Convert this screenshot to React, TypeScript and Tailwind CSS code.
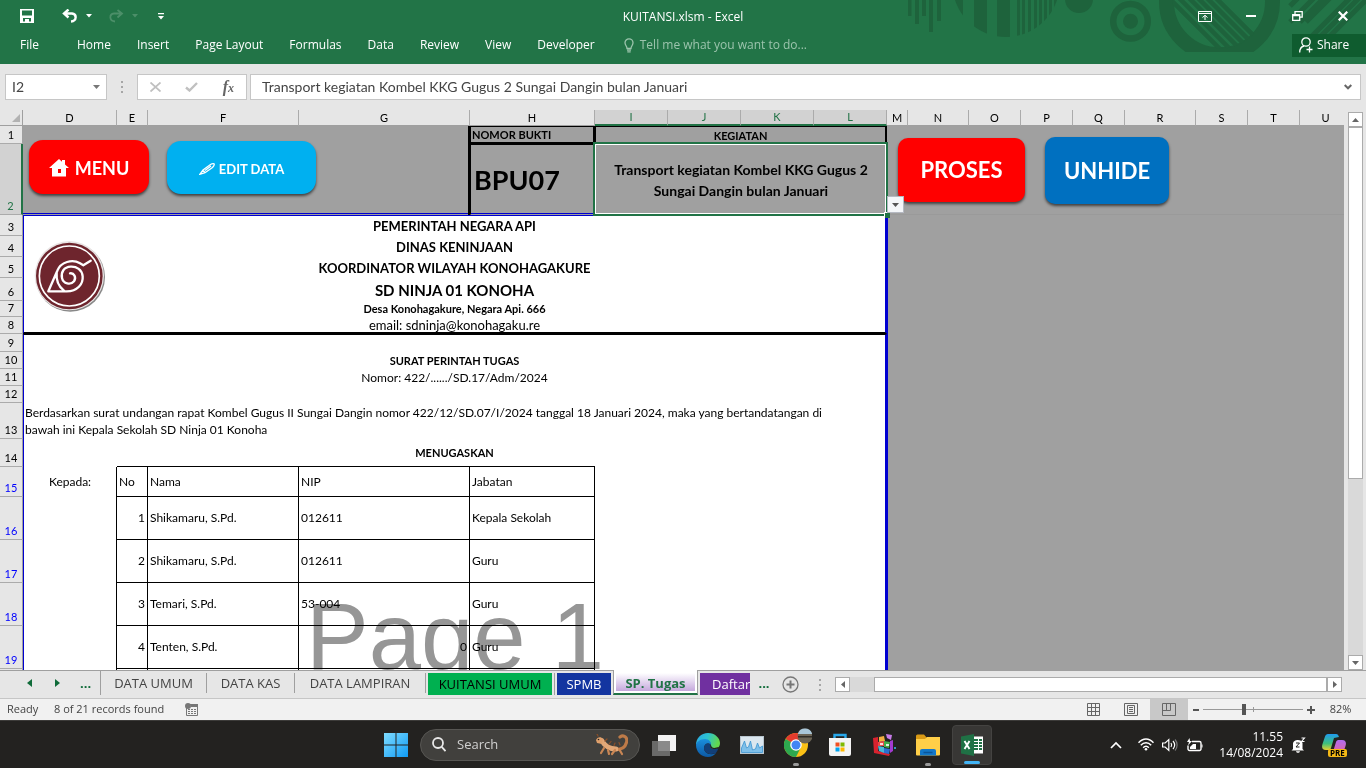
import type { ReactNode } from "react";

const COLS = [
  { id: "D", w: 94 },
  { id: "E", w: 31 },
  { id: "F", w: 151 },
  { id: "G", w: 171 },
  { id: "H", w: 125 },
  { id: "I", w: 73, active: true },
  { id: "J", w: 73, active: true },
  { id: "K", w: 73, active: true },
  { id: "L", w: 73, active: true },
  { id: "M", w: 21 },
  { id: "N", w: 61 },
  { id: "O", w: 52 },
  { id: "P", w: 52 },
  { id: "Q", w: 52 },
  { id: "R", w: 71 },
  { id: "S", w: 52 },
  { id: "T", w: 52 },
  { id: "U", w: 0 },
];

const MENUS = ["Home", "Insert", "Page Layout", "Formulas", "Data", "Review", "View", "Developer"];

const PEOPLE = [
  { row: 16, no: 1, nama: "Shikamaru, S.Pd.", nip: "012611", jabatan: "Kepala Sekolah" },
  { row: 17, no: 2, nama: "Shikamaru, S.Pd.", nip: "012611", jabatan: "Guru" },
  { row: 18, no: 3, nama: "Temari, S.Pd.", nip: "53-004", jabatan: "Guru" },
  { row: 19, no: 4, nama: "Tenten, S.Pd.", nip: "0", nipRight: true, jabatan: "Guru" },
];

/* ---------- title bar + ribbon ---------- */

function TitleArt() {
  const d = "#1e633c";
  return (
    <svg className="absolute top-0 right-0" width="466" height="52" viewBox="900 0 466 52" aria-hidden="true">
      <defs>
        <clipPath id="c1"><circle cx="1006" cy="-16.6" r="53.6" /></clipPath>
        <clipPath id="c2"><circle cx="1219.5" cy="1.8" r="47" /></clipPath>
      </defs>
      <g fill={d}>
        <rect x="908" width="3.5" height="16" />
        <rect x="915" width="4" height="24" />
        <rect x="922" width="4" height="16" />
        <rect x="929" width="4" height="32" />
        <rect x="937" width="4" height="21" />
        <g clipPath="url(#c1)">
          <rect x="950" width="13" height="52" />
          <rect x="974" width="13" height="52" />
          <rect x="997" width="13" height="52" />
          <rect x="1017" width="3" height="52" />
          <rect x="1022" width="3" height="52" />
          <rect x="1028" width="3" height="52" />
          <rect x="1034" width="3" height="52" />
          <rect x="1039" width="3" height="52" />
          <rect x="1044" width="3" height="52" />
          <rect x="1049" width="3" height="52" />
          <rect x="1054" width="3" height="52" />
        </g>
        <circle cx="1079" cy="-1" r="14" />
        <circle cx="1130.5" cy="21.3" r="7.5" />
      </g>
      <circle cx="1130.5" cy="21.3" r="17.3" fill="none" stroke={d} strokeWidth="6.5" />
      <circle cx="1219.5" cy="1.8" r="53" fill="none" stroke={d} strokeWidth="15" />
      <g clipPath="url(#c2)" stroke={d} strokeWidth="4.5">
        <path d="M1166 -5l60 60M1174 -7l60 60M1184 -7l60 60M1193 -7l60 60M1202 -7l60 60M1211 -7l60 60" />
      </g>
      <g stroke={d} strokeWidth="5">
        <path d="M1290 6l8 -8M1290 22l24 -24M1300 22l24 -24M1306 22l24 -24M1312 36l38 -38M1321 36l38 -38M1330 36l38 -38" />
      </g>
    </svg>
  );
}

function Caret({ className = "" }: { className?: string }) {
  return (
    <svg className={className} width="6" height="4" viewBox="0 0 6 4" aria-hidden="true">
      <path d="M0 0h6L3 3.5z" fill="currentColor" />
    </svg>
  );
}

function TitleBar() {
  return (
    <header className="relative shrink-0 h-16 bg-[#227447] text-white text-xs">
      <TitleArt />
      <div className="relative grid grid-cols-[1fr_auto_1fr] items-center h-8">
        <div className="flex items-center pl-5">
          <button aria-label="Save">
            <svg width="14" height="14" viewBox="0 0 14 14">
              <path d="M0 0h14v14H0zM2 1.5v5h10v-5zM3 9v3.500h2V10h4v2.500h2V9z" fill="#fff" fillRule="evenodd" />
              <path d="M7 10.500h1.500v2.500H7z" fill="#fff" />
            </svg>
          </button>
          <button aria-label="Undo" className="ml-7">
            <svg width="16" height="14" viewBox="0 0 16 14" fill="none" stroke="#fff" strokeWidth="2.400">
              <path d="M6.500 .5L2 4.500l4.500 4M2.500 4.500H10c5 .5 5 7.500-1 8" />
            </svg>
          </button>
          <Caret className="ml-2" />
          <button aria-label="Redo" className="ml-4 text-[#4c8f69]">
            <svg width="16" height="14" viewBox="0 0 16 14" fill="none" stroke="currentColor" strokeWidth="1.800">
              <path d="M9.500 1L14 4.500l-4.500 4M13.500 4.500H6c-5 .5-5 7.500 1 8" />
            </svg>
          </button>
          <Caret className="ml-2 text-[#4c8f69]" />
          <button aria-label="Customize Quick Access Toolbar" className="ml-5">
            <svg width="6" height="7" viewBox="0 0 6 7"><path d="M0 0h6v1.200H0zM0 3h6L3 6.500z" fill="#fff" /></svg>
          </button>
        </div>
        <h1 className="pt-[2px]">KUITANSI.xlsm - Excel</h1>
        <div className="flex items-center justify-end pr-4">
          <button aria-label="Ribbon Display Options">
            <svg width="14" height="11" viewBox="0 0 14 11" fill="none" stroke="#fff">
              <path d="M.5.5h13v10H.5zM.5 2.500h13M7 9V4.500M4.500 6.500L7 4.300l2.500 2.200" />
            </svg>
          </button>
          <button aria-label="Minimize" className="ml-8 w-3.5">
            <svg width="10" height="2" className="mx-auto"><rect width="10" height="2" fill="#fff" /></svg>
          </button>
          <button aria-label="Restore" className="ml-8 w-3.5">
            <svg width="11" height="10" viewBox="0 0 11 10" className="mx-auto" fill="none" stroke="#fff" strokeWidth="1.300">
              <path d="M.7 3.700h7v5.600h-7zM.7 4.500h7M3 3.200V.7h7.200v5.500H8" />
            </svg>
          </button>
          <button aria-label="Close" className="ml-8 w-3.5">
            <svg width="10" height="10" viewBox="0 0 10 10" className="mx-auto" stroke="#fff" strokeWidth="2.200">
              <path d="M.7.7l8.600 8.600M9.300.7L.7 9.300" />
            </svg>
          </button>
        </div>
      </div>
      <div className="relative flex items-center h-[26px]">
        <button className="pl-5 w-16 text-left">File</button>
        <nav className="flex">
          {MENUS.map((m) => (
            <a key={m} href="#" className="px-[13px] whitespace-nowrap">{m}</a>
          ))}
        </nav>
        <button className="flex items-center gap-1.5 ml-4 text-[#9cc4ad] whitespace-nowrap">
          <svg width="10" height="15" viewBox="0 0 10 15" fill="none" stroke="currentColor" strokeWidth="1.300">
            <path d="M3 10.500C3 8 1 7.500 1 4.800a4 4 0 018 0C9 7.500 7 8 7 10.500zM3 12.200h4M3.300 13.800h3.400" />
          </svg>
          Tell me what you want to do...
        </button>
        <button className="ml-auto flex items-center gap-1 h-[23px] w-[74px] pl-[7px] bg-[#0f5c2f]">
          <svg width="14" height="16" viewBox="0 0 14 16" fill="none" stroke="#fff" strokeWidth="1.300">
            <circle cx="7" cy="5" r="4.200" />
            <path d="M.7 15.500c0-4 2-6 4.300-6.500M10.500 9.500v6M7.500 12.500h6" />
          </svg>
          Share
        </button>
      </div>
    </header>
  );
}

function FormulaBar() {
  return (
    <div className="shrink-0 flex items-center h-[46px] px-[5px] bg-[#e6e6e6] text-[#444] font-['Lato',sans-serif]">
      <div className="flex items-center w-[102px] h-[26px] bg-white border border-[#c6c6c6]">
        <input aria-label="Name Box" defaultValue="I2" className="w-0 flex-1 pl-[6px] text-sm outline-none" />
        <button aria-label="Name Box list" className="w-5 text-[#777]">
          <svg width="7" height="4" viewBox="0 0 7 4" className="mx-auto"><path d="M0 0h7L3.500 4z" fill="currentColor" /></svg>
        </button>
      </div>
      <div className="flex flex-col gap-[3px] mx-3.5">
        <i className="block size-0.5 bg-[#a6a6a6]" />
        <i className="block size-0.5 bg-[#a6a6a6]" />
        <i className="block size-0.5 bg-[#a6a6a6]" />
      </div>
      <div className="flex items-center justify-between w-[110px] h-[26px] px-[12px] bg-white border border-[#c6c6c6]">
        <button aria-label="Cancel">
          <svg width="11" height="10" viewBox="0 0 11 10" stroke="#c0c0c0" strokeWidth="1.800"><path d="M.5.5l10 9M10.500.5l-10 9" /></svg>
        </button>
        <button aria-label="Enter">
          <svg width="13" height="10" viewBox="0 0 13 10" fill="none" stroke="#c0c0c0" strokeWidth="2.400"><path d="M1 5.500l3.500 3L12 1" /></svg>
        </button>
        <button aria-label="Insert Function" className="font-['Liberation_Serif',serif] font-bold italic text-base leading-4 text-[#666]">
          f<span className="text-xs">x</span>
        </button>
      </div>
      <div className="flex flex-1 items-center ml-[3px] h-[26px] bg-white border border-[#c6c6c6]">
        <input
          aria-label="Formula Bar"
          defaultValue="Transport kegiatan Kombel KKG Gugus 2 Sungai Dangin bulan Januari"
          className="flex-1 pl-[11px] text-sm outline-none"
        />
        <button aria-label="Expand Formula Bar" className="w-4">
          <svg width="8" height="6" viewBox="0 0 8 6" fill="none" stroke="#666" strokeWidth="2"><path d="M.7 1L4 4.300 7.300 1" /></svg>
        </button>
      </div>
    </div>
  );
}

/* ---------- worksheet ---------- */

function RowHead({ n, h, filtered, active }: { n: number; h: string; filtered?: boolean; active?: boolean }) {
  return (
    <th
      scope="row"
      className={`${h} p-0 pb-px align-bottom font-normal text-[11px] leading-[14px] border-b border-b-[#ababab] ${
        active ? "bg-[#d2d2d2] text-[#217346] border-r-2 border-r-[#217346]" : "bg-[#e6e6e6] border-r border-r-[#9f9f9f]"
      } ${filtered ? "text-[#0000ff]" : ""}`}
    >
      {n}
    </th>
  );
}

function Off() {
  return <td colSpan={9} className="p-0 border-l border-[#0000d0]" />;
}

function Line({ n, h, className = "", children }: { n: number; h: string; className?: string; children?: ReactNode }) {
  return (
    <tr>
      <RowHead n={n} h={h} />
      <td colSpan={9} className={`p-0 px-px bg-white text-center border-l border-l-[#0000d0] border-r-2 border-r-[#0000d0] ${className}`}>
        {children}
      </td>
      <Off />
    </tr>
  );
}

function KonohaLogo() {
  return (
    <svg className="absolute left-[34px] top-[128px]" width="72" height="75" viewBox="0 0 216 225" role="img" aria-label="Konoha">
      <circle cx="109" cy="117" r="104" fill="#555" opacity=".7" />
      <circle cx="106" cy="113" r="104" fill="#e9e5e5" />
      <circle cx="106" cy="114" r="100" fill="#6e252d" />
      <circle cx="106" cy="114" r="90" fill="none" stroke="#fff" strokeWidth="5" />
      <path
        d="M170 68l-22 14-10-6C115 62 80 72 70 98L43 160h55c32 0 50-22 48-45-2-20-18-30-36-29-20 1-30 16-26 34 4 18 26 22 36 10 8-12 0-26-12-24M68 104c-2 22 6 42 22 54"
        fill="none"
        stroke="#fff"
        strokeWidth="7"
        strokeLinejoin="round"
        strokeLinecap="round"
      />
    </svg>
  );
}

function Sheet() {
  const cell = "p-0 px-[2px] bg-white text-left font-normal border-r border-b border-black";
  return (
    <div className="relative flex-1 min-w-0 bg-[#a0a0a0] overflow-hidden">
      <table className="w-[calc(100%+8px)] table-fixed border-separate border-spacing-0 font-['Lato',sans-serif] text-xs leading-4 text-black">
        <colgroup>
          <col className="w-[23px]" />
          {COLS.map((c) => (
            <col key={c.id} style={c.w ? { width: c.w } : undefined} />
          ))}
        </colgroup>
        <thead>
          <tr className="h-4">
            <th className="p-0 h-4 bg-[#e6e6e6] border-r border-b border-[#9f9f9f]" aria-label="Select All">
              <svg width="8" height="8" viewBox="0 0 8 8" className="ml-auto mr-[2px]"><path d="M8 0v8H0z" fill="#b2b2b2" /></svg>
            </th>
            {COLS.map((c) => (
              <th
                key={c.id}
                scope="col"
                className={`p-0 h-4 font-normal text-[11px] leading-[14px] border-r border-r-[#ababab] ${
                  c.active ? "bg-[#d2d2d2] text-[#217346] border-b-2 border-b-[#217346]" : "bg-[#e6e6e6] border-b border-b-[#9f9f9f]"
                }`}
              >
                {c.id}
              </th>
            ))}
          </tr>
        </thead>
        <tbody>
          <tr>
            <RowHead n={1} h="h-[18px]" />
            <td colSpan={4} rowSpan={2} className="p-0 align-top border-b border-[#a0a0a0] shadow-[inset_0_-1px_0_#0000d0]">
              <div className="flex items-start gap-[18px] pl-[6px] pt-[14px] text-white">
                <button className="flex items-center justify-center gap-1.5 w-[120px] h-[54px] pt-px rounded-[14px] bg-[#ff0000] text-lg font-bold shadow-[0_2px_3px_rgba(0,0,0,0.6)]">
                  <svg width="20" height="18" viewBox="0 0 20 18" fill="#fff">
                    <path d="M10 0l3 2.700V1h3v4.500L20 9h-3v8.500h-5V10H9v7.500H3V9H0z" fillRule="evenodd" />
                    <path d="M9 14h3v3.500H9z" />
                  </svg>
                  MENU
                </button>
                <button className="flex items-center justify-center gap-1 w-[149px] h-[53px] mt-px pt-[2px] rounded-[14px] bg-[#00b0f0] text-[13px] font-bold shadow-[0_2px_3px_rgba(0,0,0,0.6)]">
                  <svg width="16" height="12" viewBox="0 0 16 12" fill="none" stroke="#fff" strokeWidth="1.300">
                    <path d="M.8 11.300L4 7l7.500-5.500c2-1.200 3.800-.8 3.800-.3S15 3 13.500 4.500L6 9.700zM4 7l2 2.700M6 7.500l6-4.500" />
                  </svg>
                  EDIT DATA
                </button>
              </div>
            </td>
            <td className="p-0 pl-[1px] text-[11px] font-bold leading-[14px] border-l border-t border-b-2 border-r-2 border-black shadow-[-2px_0_0_#000]">NOMOR BUKTI</td>
            <td colSpan={4} className="p-0 text-center text-[11px] font-bold leading-[14px] border-t border-l border-r-2 border-black">KEGIATAN</td>
            <td colSpan={9} rowSpan={2} className="p-0 align-top border-b border-[#9a9a9a]">
              <div className="flex items-start gap-5 pl-[11px] pt-[11px] text-white text-[22px] font-bold">
                <button className="w-[127px] h-16 mt-px rounded-[10px] bg-[#ff0000] shadow-[0_2px_3px_rgba(0,0,0,0.6)]">PROSES</button>
                <button className="w-[124px] h-[67px] rounded-[10px] bg-[#0070c0] shadow-[0_2px_3px_rgba(0,0,0,0.6)]">UNHIDE</button>
              </div>
            </td>
          </tr>
          <tr>
            <RowHead n={2} h="h-[71px]" active />
            <td className="p-0 pl-[3px] text-[27px] leading-8 font-bold border-l border-l-black border-t border-t-black border-b border-b-[#a0a0a0] shadow-[-2px_0_0_#000,inset_0_-1px_0_#0000d0]">BPU07</td>
            <td colSpan={4} className="relative p-0 px-3 text-center text-sm leading-[21px] font-bold">
              Transport kegiatan Kombel KKG Gugus 2 Sungai Dangin bulan Januari
              <div className="absolute -top-[2px] -left-[2px] -right-px -bottom-px border-2 border-[#217346] shadow-[inset_0_0_0_1px_#fff]" />
              <div className="absolute -right-[3px] -bottom-[3px] size-[6px] bg-[#217346] border-l border-t border-white" />
              <button aria-label="Open list" className="absolute left-full bottom-[2px] w-[17px] h-[17px] bg-[#f4f6f9] border border-[#b5b9c2]">
                <svg width="7" height="4" viewBox="0 0 7 4" className="mx-auto"><path d="M0 0h7L3.500 4z" fill="#555" /></svg>
              </button>
            </td>
          </tr>
          <Line n={3} h="h-[21px]" className="text-[13px] font-bold border-t border-t-[#0000d0]">PEMERINTAH NEGARA API</Line>
          <Line n={4} h="h-[21px]" className="text-[13px] font-bold">DINAS KENINJAAN</Line>
          <Line n={5} h="h-[21px]" className="text-[13px] font-bold">KOORDINATOR WILAYAH KONOHAGAKURE</Line>
          <Line n={6} h="h-[23px]" className="text-[15px] leading-5 font-bold">SD NINJA 01 KONOHA</Line>
          <Line n={7} h="h-[16px]" className="text-[11px] leading-[14px] font-bold">Desa Konohagakure, Negara Api. 666</Line>
          <Line n={8} h="h-[17px]" className="text-[13px] leading-[14px] border-b-2 border-b-black">email: sdninja@konohagaku.re</Line>
          <Line n={9} h="h-[18px]" className="border-t border-t-black" />
          <Line n={10} h="h-[17px]" className="text-[11px] font-bold">SURAT PERINTAH TUGAS</Line>
          <Line n={11} h="h-[17px]">Nomor: 422/....../SD.17/Adm/2024</Line>
          <Line n={12} h="h-[17px]" />
          <Line n={13} h="h-[36px]" className="text-left leading-[17px]">
            Berdasarkan surat undangan rapat Kombel Gugus II Sungai Dangin nomor 422/12/SD.07/I/2024 tanggal 18 Januari 2024, maka yang bertandatangan di
            <br />
            bawah ini Kepala Sekolah SD Ninja 01 Konoha
          </Line>
          <Line n={14} h="h-[28px]" className="text-[11px] font-bold">MENUGASKAN</Line>
          <tr>
            <RowHead n={15} h="h-[30px]" filtered />
            <td className="p-0 bg-white text-center border-l border-l-[#0000d0] border-r border-r-black">Kepada:</td>
            <td className={`${cell} shadow-[0_-1px_0_#000]`}>No</td>
            <td className={`${cell} shadow-[0_-1px_0_#000]`}>Nama</td>
            <td className={`${cell} shadow-[0_-1px_0_#000]`}>NIP</td>
            <td className={`${cell} shadow-[0_-1px_0_#000]`}>Jabatan</td>
            <td colSpan={4} className="p-0 bg-white border-r-2 border-[#0000d0]" />
            <Off />
          </tr>
          {PEOPLE.map((p) => (
            <tr key={p.row}>
              <RowHead n={p.row} h="h-[43px]" filtered />
              <td className="p-0 bg-white border-l border-l-[#0000d0] border-r border-r-black" />
              <td className={`${cell} text-right!`}>{p.no}</td>
              <td className={cell}>{p.nama}</td>
              <td className={`${cell} ${p.nipRight ? "text-right!" : ""}`}>{p.nip}</td>
              <td className={cell}>{p.jabatan}</td>
              <td colSpan={4} className="p-0 bg-white border-r-2 border-[#0000d0]" />
              <Off />
            </tr>
          ))}
          <tr>
            <RowHead n={20} h="h-[43px]" filtered />
            <td className="p-0 bg-white border-l border-l-[#0000d0] border-r border-r-black" />
            <td className={cell} />
            <td className={cell} />
            <td className={cell} />
            <td className={cell} />
            <td colSpan={4} className="p-0 bg-white border-r-2 border-[#0000d0]" />
            <Off />
          </tr>
        </tbody>
      </table>
      <KonohaLogo />
      {/* page break preview watermark, blended so the cell text stays on top */}
      <div className="absolute top-[480px] left-[23px] w-[864px] text-center font-['Liberation_Sans',sans-serif] text-[94px] leading-none text-[#969696] mix-blend-multiply pointer-events-none">
        Page 1
      </div>
    </div>
  );
}

function VScroll() {
  const btn = "flex items-center justify-center w-[15px] h-[15px] bg-white border border-[#ababab]";
  return (
    <div className="flex flex-col w-[22px] pl-[4px] pt-[2px] bg-[#e6e6e6]">
      <button aria-label="Scroll up" className={btn}>
        <svg width="7" height="4" viewBox="0 0 7 4"><path d="M0 4h7L3.500 0z" fill="#666" /></svg>
      </button>
      <div className="flex-1 w-[15px] bg-[#d9d9d9]">
        <div className="h-2/3 bg-white border border-[#ababab]" />
      </div>
      <button aria-label="Scroll down" className={btn}>
        <svg width="7" height="4" viewBox="0 0 7 4"><path d="M0 0h7L3.500 4z" fill="#666" /></svg>
      </button>
    </div>
  );
}

/* ---------- sheet tabs + status ---------- */

function SheetTabs() {
  const plain = "h-[20px] mt-[2px] border-r border-[#9f9f9f] text-[#444]";
  return (
    <div className="shrink-0 flex items-start h-7 bg-[#e6e6e6] border-t border-[#9f9f9f] text-[13px] leading-5 whitespace-nowrap">
      <div className="flex items-center gap-3.5 w-[101px] h-6 pl-[22px] border-r border-[#9f9f9f] text-[#0f6b39]">
        <button aria-label="Previous sheet" className="w-3.5">
          <svg width="5" height="8" viewBox="0 0 5 8" className="mx-auto"><path d="M5 0v8L0 4z" fill="currentColor" /></svg>
        </button>
        <button aria-label="Next sheet" className="w-3.5">
          <svg width="5" height="8" viewBox="0 0 5 8" className="mx-auto"><path d="M0 0v8l5-4z" fill="currentColor" /></svg>
        </button>
        <button className="pl-[2px] font-bold">...</button>
      </div>
      <button className={`${plain} w-[106px]`}>DATA UMUM</button>
      <button className={`${plain} w-[88px]`}>DATA KAS</button>
      <button className={`${plain} w-[131px]`}>DATA LAMPIRAN</button>
      <div className="mt-[2px] px-[2px] border-r border-[#9f9f9f]">
        <button className="block w-[124px] h-[22px] pb-px bg-[#00b050] text-black">KUITANSI UMUM</button>
      </div>
      <button className="w-[54px] h-[22px] mt-[2px] mx-[2px] pb-px bg-[#1335a0] text-white">SPMB</button>
      <button className="w-[85px] h-[25px] -mt-px px-[2px] pt-[3px] pb-[2px] bg-white border-x border-b-2 border-x-[#9f9f9f] border-b-[#217346] text-[#217346] font-bold">
        <span className="block h-[18px] bg-linear-to-b from-white to-[#c5a8dc] leading-5">SP. Tugas</span>
      </button>
      <button className="w-[50px] h-[22px] mt-[2px] ml-[2px] pl-3 pb-px bg-[#7030a0] text-white text-left overflow-hidden">Daftar</button>
      <button className="w-7 mt-[2px] text-center font-bold text-[#0f6b39]">...</button>
      <button aria-label="New sheet" className="mt-[5px] ml-1">
        <svg width="17" height="17" viewBox="0 0 17 17" fill="none" stroke="#777">
          <circle cx="8.500" cy="8.500" r="7.500" strokeWidth="1.300" />
          <path d="M4.500 8.500h8M8.500 4.500v8" strokeWidth="2" />
        </svg>
      </button>
      <div className="flex flex-col gap-[3px] mt-2 ml-5 mr-[14px]">
        <i className="block size-0.5 bg-[#a6a6a6]" />
        <i className="block size-0.5 bg-[#a6a6a6]" />
        <i className="block size-0.5 bg-[#a6a6a6]" />
      </div>
      <div className="flex flex-1 mt-[6px] mr-6 bg-[#d9d9d9]">
        <button aria-label="Scroll left" className="flex items-center justify-center size-[15px] bg-white border border-[#ababab]">
          <svg width="4" height="7" viewBox="0 0 4 7"><path d="M4 0v7L0 3.500z" fill="#666" /></svg>
        </button>
        <div className="flex-1 ml-6 bg-white border border-[#ababab]" />
        <button aria-label="Scroll right" className="flex items-center justify-center size-[15px] bg-white border border-[#ababab]">
          <svg width="4" height="7" viewBox="0 0 4 7"><path d="M0 0v7l4-3.500z" fill="#666" /></svg>
        </button>
      </div>
    </div>
  );
}

function StatusBar() {
  const view = "flex items-center justify-center w-[38px] h-full";
  return (
    <footer className="shrink-0 flex items-center h-[22px] pl-[7px] bg-[#f1f1f1] border-t border-[#c6c6c6] text-[11px] text-[#444]">
      <span className="w-[47px]">Ready</span>
      <span className="w-[131px]">8 of 21 records found</span>
      <svg width="13" height="13" viewBox="0 0 13 13" aria-hidden="true">
        <path d="M1.500 5v7.500h11V1.500H5" fill="none" stroke="#777" />
        <path d="M6 1h7v3H6zM3 6h2v1H3zM6 6h2v1H6zM9 6h2v1H9zM3 8h2v1H3zM6 8h2v1H6zM9 8h2v1H9zM3 10h2v1H3zM6 10h2v1H6zM9 10h2v1H9z" fill="#777" />
        <circle cx="3" cy="3" r="3" fill="#777" />
      </svg>
      <div className="flex items-center h-full ml-auto">
        <button aria-label="Normal" className={view}>
          <svg width="13" height="13" viewBox="0 0 13 13" fill="none" stroke="#666"><path d="M.5.5h12v12H.5zM.5 4.500h12M.5 8.500h12M4.500.5v12M8.500.5v12" /></svg>
        </button>
        <button aria-label="Page Layout" className={view}>
          <svg width="14" height="13" viewBox="0 0 14 13" fill="none" stroke="#666"><path d="M.5.5h13v12H.5zM3.500 2.500h7v8h-7zM5 4.500h4M5 6.500h4M5 8.500h4" /></svg>
        </button>
        <button aria-label="Page Break Preview" className={`${view} bg-[#c8c8c8]`}>
          <svg width="14" height="13" viewBox="0 0 14 13" fill="none" stroke="#666"><path d="M.5.5h13v12H.5zM.5 7.500h8v-7M4.500.5v7" /></svg>
        </button>
        <button aria-label="Zoom out" className="w-[15px]">
          <svg width="6" height="2" className="ml-[5px]"><rect width="6" height="2" fill="#555" /></svg>
        </button>
        <div className="relative flex items-center w-[100px]">
          <i className="absolute left-1/2 w-px h-[5px] bg-[#999]" />
          <input
            type="range"
            aria-label="Zoom"
            min={10}
            max={190}
            defaultValue={84}
            className="relative w-full h-3 appearance-none bg-transparent [&::-webkit-slider-runnable-track]:h-px [&::-webkit-slider-runnable-track]:bg-[#999] [&::-webkit-slider-thumb]:appearance-none [&::-webkit-slider-thumb]:w-1 [&::-webkit-slider-thumb]:h-[11px] [&::-webkit-slider-thumb]:-mt-[5px] [&::-webkit-slider-thumb]:bg-[#555]"
          />
        </div>
        <button aria-label="Zoom in" className="w-4">
          <svg width="8" height="8" viewBox="0 0 8 8" className="mx-auto"><path d="M0 3h8v2H0zM3 0h2v8H3z" fill="#555" /></svg>
        </button>
        <span className="w-[47px] text-center pr-[4px]">82%</span>
      </div>
    </footer>
  );
}

/* ---------- windows taskbar ---------- */

function TaskButton({ label, on, dot, children }: { label: string; on?: boolean; dot?: boolean; children: ReactNode }) {
  return (
    <button aria-label={label} className={`relative flex items-center justify-center w-10 h-10 mx-[2px] rounded ${on ? "bg-[#383735] border border-[#444341]" : ""}`}>
      {children}
      {dot && <i className="absolute -bottom-px left-1/2 -ml-[3px] w-[6px] h-[3px] rounded-full bg-[#9a9a9a]" />}
      {on && <i className="absolute bottom-0 left-1/2 -ml-2 w-4 h-[3px] rounded-full bg-[#42b4f5]" />}
    </button>
  );
}

function Taskbar() {
  return (
    <div className="shrink-0 grid grid-cols-[1fr_auto_1fr] items-center h-12 bg-[#232220] border-t border-[#3c3b39] text-white text-xs">
      <div />
      <div className="flex items-center pl-[2px]">
        <button aria-label="Start" className="flex justify-center w-11 mr-[2px]">
          <svg width="24" height="24" viewBox="0 0 24 24">
            <defs>
              <linearGradient id="win" x1="0" y1="0" x2="1" y2="1" gradientUnits="objectBoundingBox">
                <stop offset="0" stopColor="#7fdcff" /><stop offset="1" stopColor="#0f9bf5" />
              </linearGradient>
            </defs>
            <path d="M0 0h11.500v11.500H0zM12.500 0H24v11.500H12.500zM0 12.500h11.500V24H0zM12.500 12.500H24V24H12.500z" fill="url(#win)" />
          </svg>
        </button>
        <label className="flex items-center w-[220px] h-8 mr-[2px] px-[11px] rounded-full bg-[#41403d] border border-[#575653]">
          <svg width="14" height="15" viewBox="0 0 14 15" fill="none" stroke="#e8e8e8" strokeWidth="1.800">
            <circle cx="6" cy="6" r="5" /><path d="M9.700 9.900l3.800 4.200" />
          </svg>
          <input type="text" aria-label="Search" placeholder="Search" className="w-0 flex-1 ml-[11px] text-[13px] bg-transparent outline-none placeholder:text-[#d0d0d0]" />
          <svg width="34" height="22" viewBox="0 0 34 22" fill="none" strokeLinecap="round" aria-hidden="true">
            <path d="M26 3c4-3 8 1 6.500 5.500C31 14 27 16 21 15.500c-5 0-8-2-12-7.500" stroke="#bd7a48" strokeWidth="3.200" />
            <path d="M8 7c3 5 8 8 14 8" stroke="#e2a878" strokeWidth="5" />
            <path d="M2 6c1-3 5-4 7-1l-1 5-5-1z" fill="#dfa06c" />
            <path d="M10 14l-3 5M14 16l1 4M21 16l-3 4M25 15l3 5" stroke="#c98654" strokeWidth="2.200" />
            <path d="M11 7l2-2M15 10l2-2.500M20 11.500l1-2.500M26 11l-1-2.500M4 2L3 0" stroke="#8a4f2a" strokeWidth="1.200" />
            <circle cx="4.500" cy="5.500" r=".8" fill="#222" />
          </svg>
        </label>
        <TaskButton label="Task View">
          <svg width="24" height="24" viewBox="0 0 24 24">
            <rect x="6" y="2" width="18" height="16" fill="#f3f3f3" />
            <rect x="0" y="8" width="18" height="15" fill="#777" opacity=".85" />
          </svg>
        </TaskButton>
        <TaskButton label="Edge">
          <svg width="24" height="24" viewBox="0 0 24 24">
            <defs>
              <linearGradient id="edge" x1="0" y1="0" x2="1" y2=".3"><stop offset="0" stopColor="#2aa6e8" /><stop offset=".5" stopColor="#2cc3d0" /><stop offset="1" stopColor="#62d84e" /></linearGradient>
              <linearGradient id="edge2" x1="0" y1="0" x2="0" y2="1"><stop offset="0" stopColor="#1a8fdd" /><stop offset="1" stopColor="#0c59a4" /></linearGradient>
            </defs>
            <path d="M0 12C0 5 5 0 12 0s12 5 12 10c0 4-3 6-6 6-2.500 0-4-1-3.500-2 1-1 1-6-4.500-6C5 8 1 11 0 12z" fill="url(#edge)" />
            <path d="M0 12c.5-3 4-6 9-6 4 0 6.500 3 6 6-3-3-7-1-7 3 0 5 6 8 12 5-2 2.600-5 4-8 4C5 24 0 18.500 0 12z" fill="url(#edge2)" />
            <path d="M8 15c0-4 4-6 6.500-3.500.5 1-.5 2 0 3 1.500 2 6 2 8 .5-1 3-2 4.500-3.500 5.500C13 22 8 20 8 15z" fill="#123f78" />
            <path d="M14.500 11.500c.5 1-.5 2 0 3 1.500 2 6 2 8 .5 1-2-4 1-6-.500-1.500-1-1-2-2-3z" fill="#232220" />
          </svg>
        </TaskButton>
        <TaskButton label="Task Manager">
          <svg width="24" height="18" viewBox="0 0 24 18">
            <rect x=".5" y=".5" width="23" height="17" fill="#dbe7ef" stroke="#b9c6cf" />
            <path d="M1.500 16.500V12l3-7 2 7 2-1 2-6 2 9 3-1 2-6 2 5 3-2v6.500z" fill="#7fc0ea" stroke="#3b93cf" strokeWidth=".8" />
          </svg>
        </TaskButton>
        <TaskButton label="Chrome" dot>
          <svg width="28" height="29" viewBox="0 0 28 29" className="ml-1 -mt-1">
            <circle cx="12" cy="17" r="12" fill="#fbc116" />
            <path d="M12 17L1.600 11A12 12 0 0122.400 11z" fill="#e33b2e" />
            <path d="M12 17L1.600 11A12 12 0 0012 29l4.500-9z" fill="#2da94f" />
            <path d="M6 7h14l2.400 4H12z" fill="#e33b2e" />
            <circle cx="12" cy="17" r="5.800" fill="#fff" />
            <circle cx="12" cy="17" r="4.500" fill="#4285f4" />
            <circle cx="21" cy="8" r="7.500" fill="#6b6455" />
            <path d="M13.800 6a7.500 7.500 0 0114.400 0z" fill="#a9c6d8" />
            <path d="M14 8h14v1.500H14z" fill="#2f2b25" />
          </svg>
        </TaskButton>
        <TaskButton label="Microsoft Store">
          <svg width="24" height="24" viewBox="0 0 24 24">
            <path d="M6.500 6V2h11v4" fill="none" stroke="#28a8ea" strokeWidth="2.400" />
            <path d="M1 5h22v16a2 2 0 01-2 2H3a2 2 0 01-2-2z" fill="#f4f4f4" />
            <path d="M7.500 9.500h4v4h-4z" fill="#f25022" /><path d="M12.500 9.500h4v4h-4z" fill="#7fba00" />
            <path d="M7.500 14.500h4v4h-4z" fill="#00a4ef" /><path d="M12.500 14.500h4v4h-4z" fill="#ffb900" />
          </svg>
        </TaskButton>
        <TaskButton label="Cubes">
          <svg width="24" height="24" viewBox="0 0 24 24">
            <path d="M1 5l5-1v14l12 3-1 2-15-3z" fill="#d8232f" />
            <path d="M7 4l5-1 1 5-6 1z" fill="#f0b040" /><path d="M6 9l6-1v5H6z" fill="#e84a4a" />
            <path d="M12 8l6 1-1 6-5-1z" fill="#3fae49" /><path d="M6 13l6 1v6l-5-2z" fill="#48b8d8" />
            <path d="M12 15l6 1-1 5-5-1z" fill="#2b6fd0" /><path d="M18 8l3-1v11l-3 2z" fill="#a33bd0" />
            <path d="M14 1l6 1-1 5-4-2z" fill="#c77be8" /><path d="M8 10l3 0v2H8zM14 11h3v2h-3z" fill="#fff" opacity=".8" />
            <circle cx="23" cy="15" r="1" fill="#3cc0f0" />
          </svg>
        </TaskButton>
        <TaskButton label="File Explorer" dot>
          <svg width="24" height="22" viewBox="0 0 24 22">
            <path d="M0 2a1.500 1.500 0 011.500-1.500H8L11 4h13v6H0z" fill="#d99a15" />
            <path d="M0 5h9l2-2h13v17.500a1 1 0 01-1 1H1a1 1 0 01-1-1z" fill="#ffcf48" />
            <path d="M4 21.500V17a2 2 0 012-2h12a2 2 0 012 2v4.500z" fill="#1277c9" />
            <path d="M7.500 18.500h9" stroke="#0a5599" strokeWidth="1.500" />
          </svg>
        </TaskButton>
        <TaskButton label="Excel" on>
          <svg width="22" height="22" viewBox="0 0 22 22">
            <path d="M12 2.500h10v17H12z" fill="#fff" />
            <path d="M13 5h4v2h-4zM18 5h3v2h-3zM13 8h4v2h-4zM18 8h3v2h-3zM13 11h4v2h-4zM18 11h3v2h-3zM13 14h4v2h-4zM18 14h3v2h-3z" fill="#1f7145" />
            <path d="M0 2.500L13 0v22L0 19.500z" fill="#1f7145" />
            <path d="M3.500 7l5 8M8.500 7l-5 8" stroke="#fff" strokeWidth="1.900" />
          </svg>
        </TaskButton>
      </div>
      <div className="flex items-center justify-end pr-5">
        <button aria-label="Show hidden icons" className="mr-4">
          <svg width="12" height="8" viewBox="0 0 12 8" fill="none" stroke="#fff" strokeWidth="1.700"><path d="M1 7l5-5 5 5" /></svg>
        </button>
        <button aria-label="Network, volume, battery" className="flex items-center gap-2 mr-4">
          <svg width="16" height="13" viewBox="0 0 16 13" fill="none" stroke="#fff" strokeWidth="1.400">
            <path d="M.5 4.800C5-.3 11-.3 15.500 4.800M2.800 7.300c3-3.500 7.400-3.500 10.400 0M5.200 9.700c1.600-1.900 4-1.900 5.600 0" />
            <circle cx="8" cy="11.300" r="1.300" fill="#fff" stroke="none" />
          </svg>
          <svg width="16" height="14" viewBox="0 0 16 14" fill="none" stroke="#fff" strokeWidth="1.200">
            <path d="M.6 5v4h2.600l3.600 3.400V1.600L3.200 5zM9 5c.8 1.200.8 2.800 0 4M11 3c2 2.400 2 5.600 0 8" />
            <path d="M13 1.500c2.800 3 2.800 8 0 11" stroke="#777" />
          </svg>
          <svg width="17" height="14" viewBox="0 0 17 14" fill="none">
            <path d="M6 3.500h7.500a1.500 1.500 0 011.500 1.500v6a1.500 1.500 0 01-1.500 1.500h-10A1.500 1.500 0 012 11V7.500" stroke="#fff" strokeWidth="1.400" />
            <path d="M16 6.500v3" stroke="#fff" />
            <path d="M4 11V9l3-3h3v5z" fill="#fff" />
            <path d="M3.500 0L1 4h2L2 7.500 6 3H4z" fill="#fff" />
          </svg>
        </button>
        <div className="text-right leading-4 mr-[8px]">
          <div>11.55</div>
          <div>14/08/2024</div>
        </div>
        <button aria-label="Notifications" className="mr-4">
          <svg width="15" height="16" viewBox="0 0 15 16">
            <path d="M2 12V7c0-5 9-5 9.500-1V12l1.500 1.500H.5zM5 14.300h4c-.5 2-3.500 2-4 0z" fill="#fff" />
            <path d="M5 6h3.500L5 10h3.500M10.500 1h3l-3 3.500h3" fill="none" stroke="#232220" strokeWidth="1" />
            <path d="M10.500 1h3l-3 3.500h3" fill="none" stroke="#fff" strokeWidth="1.100" />
          </svg>
        </button>
        <button aria-label="Copilot" className="relative">
          <svg width="24" height="22" viewBox="0 0 24 22">
            <defs>
              <linearGradient id="cp1" x1="0" y1="0" x2="0" y2="1"><stop offset="0" stopColor="#1f9bf0" /><stop offset=".6" stopColor="#3fc07a" /><stop offset="1" stopColor="#e5d030" /></linearGradient>
              <linearGradient id="cp2" x1="0" y1="0" x2="0" y2="1"><stop offset="0" stopColor="#b06cf0" /><stop offset="1" stopColor="#f0648c" /></linearGradient>
            </defs>
            <path d="M6 0h8c2 0 2.500 1.500 3 3l-5 1-3 10c-.5 1.500-1.500 2-3 2H4c-4 0-4.500-3-3.500-6L3 2.500C3.500 1 4.500 0 6 0z" fill="url(#cp1)" />
            <path d="M18 22h-8c-2 0-3-1-3-3l4-1 3-10c.5-1.500 1.500-2 3-2h3c4 0 4.500 3 3.500 6L21 19.500c-.5 1.500-1.500 2.500-3 2.500z" fill="url(#cp2)" />
          </svg>
          <span className="absolute left-[6px] -bottom-px px-[2px] rounded-xs bg-[#f5b916] text-black text-[8px] leading-[8px] font-bold">PRE</span>
        </button>
      </div>
    </div>
  );
}

export default function App() {
  return (
    <div className="flex flex-col h-screen overflow-hidden bg-[#e6e6e6] font-['Open_Sans',sans-serif]">
      <TitleBar />
      <FormulaBar />
      <main className="flex flex-1 min-h-0">
        <Sheet />
        <VScroll />
      </main>
      <SheetTabs />
      <StatusBar />
      <Taskbar />
    </div>
  );
}
